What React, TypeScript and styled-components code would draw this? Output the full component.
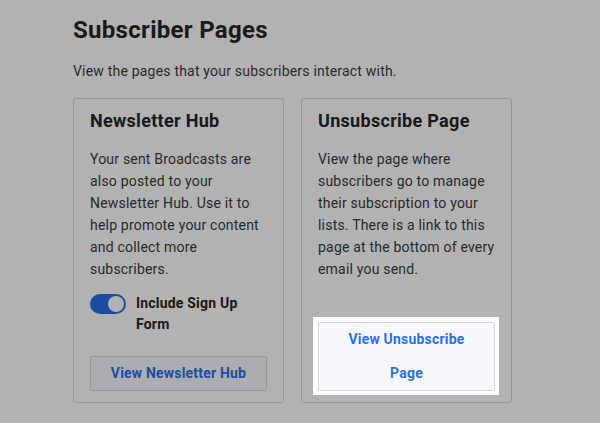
import React from "react";
import styled, { createGlobalStyle } from "styled-components";

const Global = createGlobalStyle`
  html, body { margin: 0; padding: 0; background: #ffffff; }
  body { font-family: Roboto, "Noto Sans", "Liberation Sans", sans-serif; -webkit-font-smoothing: antialiased; }
`;

const Page = styled.div`
  width: 600px;
  height: 423px;
  overflow: hidden;
  box-sizing: border-box;
  padding: 14px 0 0 73px;
`;

const Title = styled.h1`
  margin: 0;
  font-size: 24px;
  line-height: 32px;
  font-weight: 700;
  color: #262626;
  letter-spacing: 0.3px;
`;

const Subtitle = styled.p`
  margin: 15px 0 0;
  font-size: 14px;
  line-height: 20px;
  color: #3a3a3a;
  letter-spacing: 0.2px;
`;

const Cards = styled.div`
  display: grid;
  grid-template-columns: 211px 211px;
  gap: 17px;
  margin-top: 17px;
  height: 305px;
`;

const Card = styled.section`
  border: 1px solid #d7d8de;
  border-radius: 3px;
  padding: 8px 16px 11px;
  display: flex;
  flex-direction: column;
  box-sizing: border-box;
  min-height: 0;
`;

const CardTitle = styled.h2`
  margin: 0;
  font-size: 18px;
  line-height: 28px;
  font-weight: 700;
  color: #262626;
  letter-spacing: 0.3px;
`;

const Body = styled.p`
  margin: 13px 0 0;
  font-size: 14px;
  line-height: 22px;
  color: #3a3a3a;
  letter-spacing: 0.2px;
`;

const ToggleRow = styled.label`
  display: flex;
  align-items: flex-start;
  gap: 10px;
  margin-top: 13px;
`;

const Track = styled.span`
  flex: none;
  width: 36px;
  height: 20px;
  border-radius: 10px;
  background: #2b6be8;
  margin-top: 1px;
  display: flex;
  align-items: center;
  justify-content: flex-end;
  padding: 0 2px;
  box-sizing: border-box;
`;

const Knob = styled.span`
  width: 16px;
  height: 16px;
  border-radius: 50%;
  background: #ffffff;
`;

const ToggleLabel = styled.span`
  font-size: 14px;
  line-height: 21px;
  font-weight: 700;
  color: #262626;
  letter-spacing: 0.2px;
`;

const Footer = styled.div<{ $highlight?: boolean }>`
  margin-top: auto;
  display: flex;
  ${(p) =>
    p.$highlight
      ? `
    position: relative;
    z-index: 20;
    background: #ffffff;
    padding: 5px 4px 4px 5px;
    margin: auto -4px -4px -5px;
  `
      : ""}
`;

const Button = styled.button`
  width: 100%;
  border: 1px solid #d7d8de;
  border-radius: 2px;
  background: #f7f8fc;
  color: #2d6fe3;
  font-family: inherit;
  font-size: 14px;
  font-weight: 700;
  letter-spacing: 0.2px;
  line-height: 33.5px;
  padding: 0 12px;
  cursor: pointer;
`;

const Overlay = styled.div`
  position: fixed;
  inset: 0;
  background: rgba(0, 0, 0, 0.3);
  z-index: 10;
`;

export default function App() {
  return (
    <>
      <Global />
      <Page>
        <Title>Subscriber Pages</Title>
        <Subtitle>View the pages that your subscribers interact with.</Subtitle>
        <Cards>
          <Card>
            <CardTitle>Newsletter Hub</CardTitle>
            <Body>
              Your sent Broadcasts are also posted to your Newsletter Hub. Use it to help promote
              your content and collect more subscribers.
            </Body>
            <ToggleRow>
              <Track>
                <Knob />
              </Track>
              <ToggleLabel>Include Sign Up Form</ToggleLabel>
            </ToggleRow>
            <Footer>
              <Button>View Newsletter Hub</Button>
            </Footer>
          </Card>
          <Card>
            <CardTitle>Unsubscribe Page</CardTitle>
            <Body>
              View the page where subscribers go to manage their subscription to your lists. There
              is a link to this page at the bottom of every email you send.
            </Body>
            <Footer $highlight>
              <Button>View Unsubscribe Page</Button>
            </Footer>
          </Card>
        </Cards>
      </Page>
      <Overlay />
    </>
  );
}
